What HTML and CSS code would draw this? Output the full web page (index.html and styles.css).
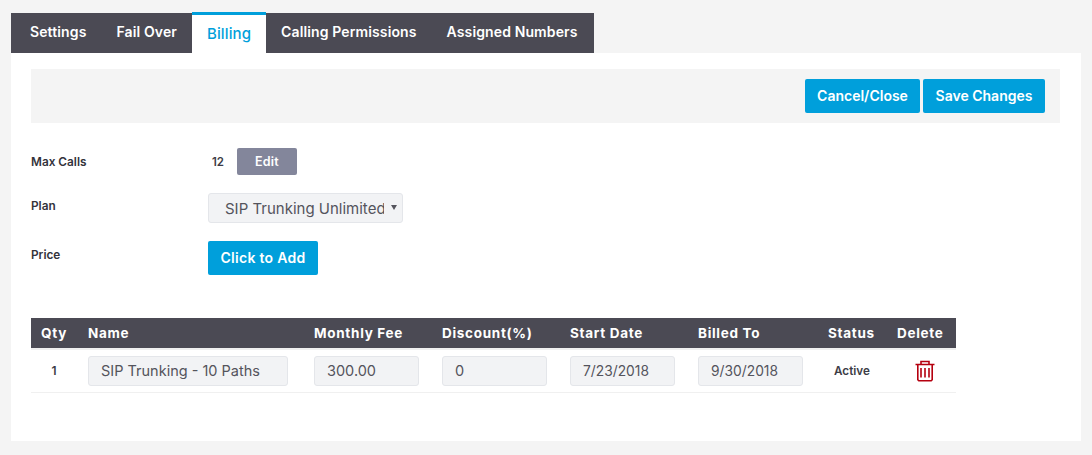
FILE: index.html
```html
<!DOCTYPE html>
<html lang="en">
<head>
    <meta charset="UTF-8">
    <meta name="viewport" content="width=device-width, initial-scale=1.0">
    <title>Billing</title>
    <link rel="stylesheet" href="styles.css">
</head>
<body>
    <ul class="tabs">
        <li class="tab">Settings</li>
        <li class="tab">Fail Over</li>
        <li class="tab active">Billing</li>
        <li class="tab">Calling Permissions</li>
        <li class="tab">Assigned Numbers</li>
    </ul>
    <div class="panel">
        <div class="actions">
            <button class="btn cancel">Cancel/Close</button>
            <button class="btn save">Save Changes</button>
        </div>

        <div class="field max-calls">
            <label>Max Calls</label>
            <span class="count">12</span>
            <button class="btn-edit">Edit</button>
        </div>
        <div class="field plan">
            <label>Plan</label>
            <div class="select">
                <span class="select-text">SIP Trunking Unlimited</span>
                <span class="caret"></span>
            </div>
        </div>
        <div class="field price">
            <label>Price</label>
            <button class="btn">Click to Add</button>
        </div>

        <table class="items">
            <colgroup>
                <col class="c-qty"><col class="c-name"><col class="c-fee"><col class="c-disc">
                <col class="c-start"><col class="c-end"><col class="c-status"><col class="c-del">
            </colgroup>
            <thead>
                <tr>
                    <th class="qty-head">Qty</th>
                    <th>Name</th>
                    <th>Monthly Fee</th>
                    <th>Discount(%)</th>
                    <th>Start Date</th>
                    <th>Billed To</th>
                    <th>Status</th>
                    <th>Delete</th>
                </tr>
            </thead>
            <tbody>
                <tr>
                    <td class="center">1</td>
                    <td><input class="input wide" type="text" value="SIP Trunking - 10 Paths"></td>
                    <td><input class="input" type="text" value="300.00"></td>
                    <td><input class="input" type="text" value="0"></td>
                    <td><input class="input date" type="text" value="7/23/2018"></td>
                    <td><input class="input date" type="text" value="9/30/2018"></td>
                    <td class="status">Active</td>
                    <td>
                        <svg class="trash" width="20" height="22" viewBox="0 0 20 22" fill="none" stroke="#b5000f" stroke-width="1.6">
                            <path d="M0.5 4.5h19M6 4.5V1.5h8v3M2.8 4.5v15.2l1 1h12.4l1-1V4.5"/>
                            <path d="M6 8v9.5M10 8v9.5M14 8v9.5"/>
                        </svg>
                    </td>
                </tr>
            </tbody>
        </table>
    </div>
</body>
</html>
```

FILE: styles.css
```css
* {
    box-sizing: border-box;
}
body {
    margin: 0;
    padding: 13px 11px 14px;
    background-color: #f4f4f4;
    font-family: Inter, "Open Sans", sans-serif;
    color: #3c3c46;
}
.tabs {
    display: flex;
    width: 583px;
    height: 40px;
    margin: 0;
    padding: 0 0 0 4px;
    list-style: none;
    background: #4b4a54;
}
.tab {
    padding: 0 15px;
    line-height: 38px;
    font-size: 14px;
    font-weight: 600;
    letter-spacing: 0.12px;
    color: #fff;
    white-space: nowrap;
}
.tab.active {
    margin-top: -1px;
    height: 41px;
    line-height: 38px;
    border-top: 3px solid #009fdb;
    background: #fff;
    color: #009fdb;
    font-size: 15px;
    font-weight: 500;
}
.panel {
    height: 388px;
    padding: 16px 21px 0 20px;
    background: #fff;
}
.actions {
    display: flex;
    justify-content: flex-end;
    gap: 3px;
    height: 54px;
    padding: 10px 15px;
    background: #f4f4f4;
}
.btn {
    height: 34px;
    padding: 0 0 2px;
    border: none;
    border-radius: 2px;
    background: #009fdb;
    color: #fff;
    font-family: inherit;
    font-size: 14px;
    font-weight: 600;
}
.cancel {
    width: 115px;
}
.save {
    width: 122px;
}
.field {
    display: flex;
    align-items: center;
}
.field label {
    width: 177px;
    font-size: 11.8px;
    font-weight: 600;
    color: #33333b;
}
.max-calls {
    height: 27px;
    margin-top: 25px;
}
.count {
    width: 29px;
    padding-left: 4px;
    font-size: 11.5px;
    font-weight: 600;
}
.btn-edit {
    width: 60px;
    height: 27px;
    border: none;
    border-radius: 2px;
    background: #83869b;
    color: #fff;
    font-family: inherit;
    font-size: 12.5px;
    font-weight: 600;
    letter-spacing: 0.2px;
}
.plan {
    margin-top: 18px;
}
.plan label {
    padding-bottom: 4px;
}
.select {
    display: flex;
    align-items: center;
    width: 195px;
    height: 30px;
    padding: 0 0 0 16px;
    border: 1px solid #e4e6ea;
    border-radius: 3px;
    background: #f2f3f5;
}
.select-text {
    flex: none;
    width: 159px;
    overflow: hidden;
    white-space: nowrap;
    font-size: 15px;
    color: #54545c;
}
.caret {
    margin: -1px 0 0 7px;
    border-top: 5px solid #54545c;
    border-left: 3px solid transparent;
    border-right: 3px solid transparent;
}
.price {
    margin-top: 18px;
}
.price label {
    padding-bottom: 6px;
}
.price .btn {
    width: 110px;
    letter-spacing: 0.3px;
}
.items {
    width: 925px;
    margin-top: 43px;
    table-layout: fixed;
    border-collapse: collapse;
}
.c-qty { width: 49px; }
.c-name { width: 226px; }
.c-fee, .c-disc, .c-start { width: 128px; }
.c-end { width: 130px; }
.c-status { width: 69px; }
.c-del { width: 67px; }
.items th {
    height: 31px;
    padding: 0 8px 1px;
    background: #4b4a54;
    border-bottom: 2px solid #f0f0f0;
    color: #fff;
    font-size: 13.5px;
    font-weight: 700;
    letter-spacing: 0.7px;
    text-align: left;
    white-space: nowrap;
}
.items .qty-head {
    padding-left: 10px;
}
.items td {
    height: 43px;
    padding: 0 8px;
    border-bottom: 1px solid #f0f0f0;
    font-size: 12px;
    font-weight: 600;
}
.items .center {
    padding-right: 11px;
    text-align: center;
}
.items .status {
    padding-left: 14px;
    font-size: 11.7px;
}
.input {
    display: block;
    width: 105px;
    height: 30px;
    padding: 0 12px;
    border: 1px solid #e4e6ea;
    border-radius: 3px;
    background: #f2f3f5;
    color: #54545c;
    font-family: inherit;
    font-size: 14.5px;
}
.input.wide {
    width: 200px;
}
.input.date {
    font-size: 13.8px;
}
.trash {
    display: block;
    margin-left: 18px;
}
```
